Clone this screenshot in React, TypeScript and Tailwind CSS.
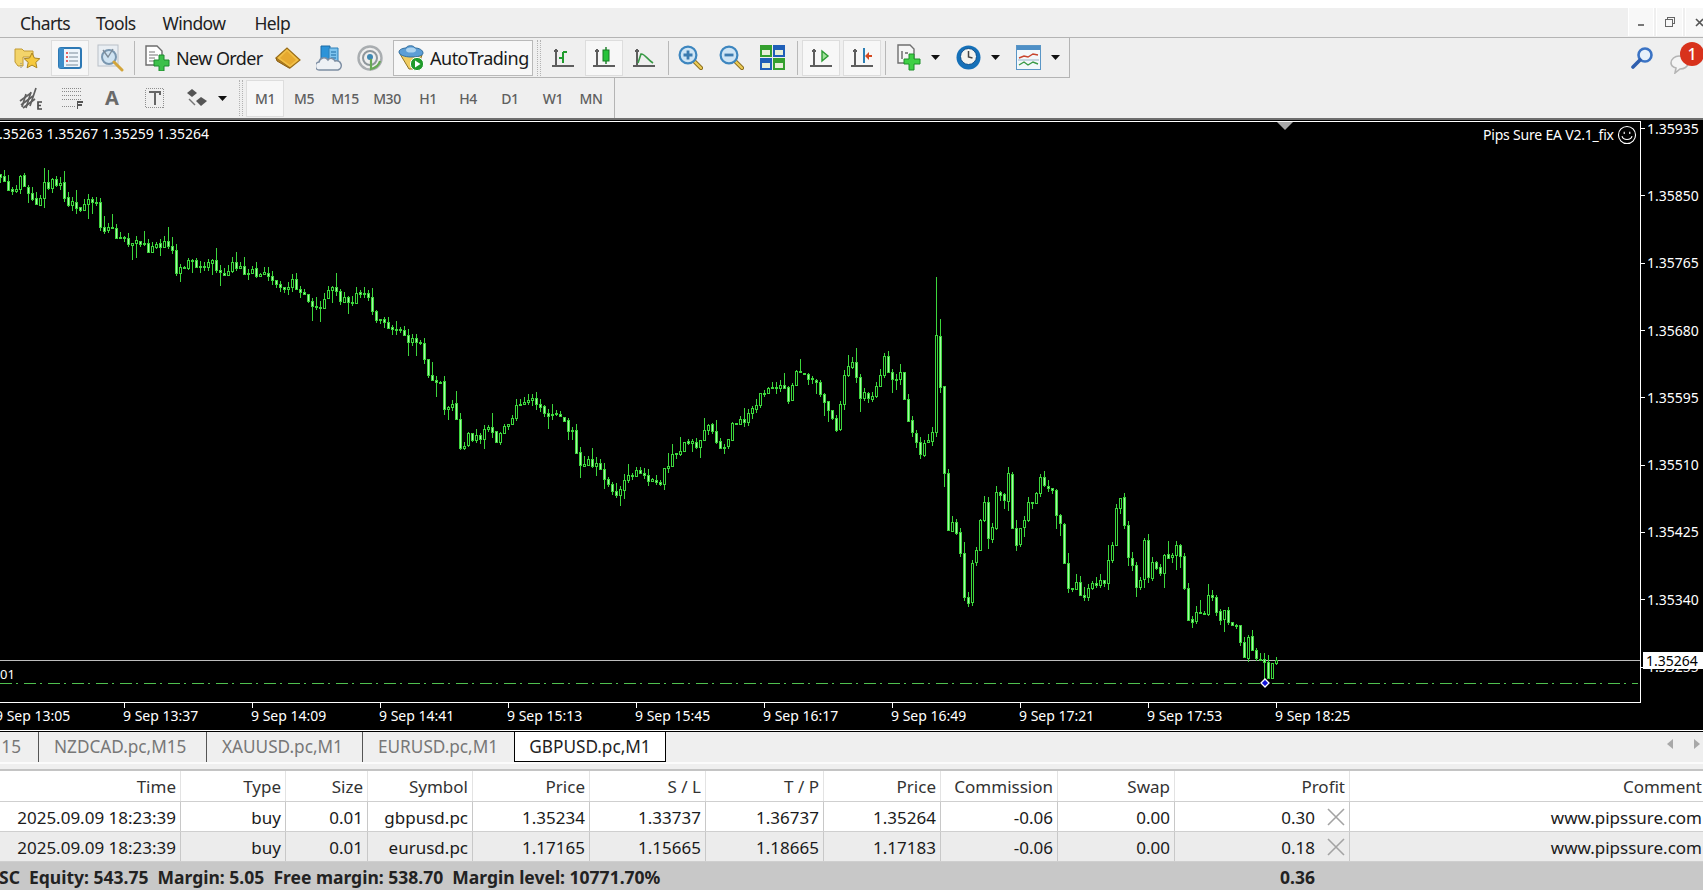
import React from "react";

const FONT = "font-['Noto_Sans','Liberation_Sans',sans-serif]";

/* ---------- chart data (image coordinates) ---------- */
const leftAnchors: [number, number][] = [
  [0,182],[10,192],[20,180],[33,200],[40,203],[44,180],[48,183],[60,183],[62,198],[80,205],[88,200],[97,205],[100,228],
  [115,233],[123,243],[133,245],[138,235],[145,250],[155,247],[163,240],[172,248],[173,273],[180,270],[188,257],[200,268],
  [213,257],[217,275],[225,275],[232,262],[245,270],[260,275],[270,272],[277,290],[283,292],[293,275],[297,293],[308,297],
  [317,310],[332,283],[340,297],[353,300],[363,290],[372,310],[380,323],[393,327],[405,338],[420,340],[422,358],[428,373],
  [440,385],[445,410],[455,405],[457,430],[460,445],[468,438],[480,440],[490,423],[497,440],[508,420],[520,402],[537,399],
  [547,417],[555,412],[573,432],[577,465],[588,460],[593,463],[608,483],[617,497],[625,477],[637,473],[657,487],[667,463],
  [683,447],[700,443],[710,423],[717,447],[728,443],[733,423],[745,423],[760,395],[780,383],[788,400],[793,375],[813,375],
  [828,413],[837,430],[843,373],[852,363],[860,393],[868,398],[880,377],[885,353],[890,382],[900,372],[908,420],[920,450],
  [928,437],[932,437],
];
const rightCloses = [335,387,473,530,522,533,553,597,603,563,550,520,502,538,527,492,495,500,473,528,545,528,520,502,503,493,477,485,488,490,515,523,563,588,589,582,595,597,588,583,585,580,583,560,545,508,498,525,557,565,587,580,540,577,562,568,573,555,558,555,545,556,588,620,622,612,613,613,595,597,612,620,610,622,625,625,642,657,637,650,658,660,662,678,663,660];

type Candle = { x: number; o: number; c: number; hi: number; lo: number };
function buildCandles(): Candle[] {
  let s = 12345;
  const r = () => { s = (s * 1664525 + 1013904223) % 4294967296; return s / 4294967296; };
  const closes: [number, number][] = [];
  let a = 0;
  for (let x = 0; x <= 932; x += 4) {
    while (a < leftAnchors.length - 2 && leftAnchors[a + 1][0] < x) a++;
    const [x0, y0] = leftAnchors[a];
    const [x1, y1] = leftAnchors[a + 1];
    const t = Math.min(1, Math.max(0, (x - x0) / Math.max(1, x1 - x0)));
    closes.push([x, Math.round(y0 + (y1 - y0) * t + (r() - 0.5) * 10)]);
  }
  rightCloses.forEach((c, i) => closes.push([936 + i * 4, c]));
  const spikes: Record<number, [number, number]> = { 44: [168, 208], 48: [170, 190], 936: [277, 437], 940: [319, 393], 944: [387, 487], 1276: [657, 665], 1264: [653, 680], 1272: [663, 679], 1268: [655, 678], 1108: [545, 590] };
  const out: Candle[] = [];
  closes.forEach(([x, c], i) => {
    const o = i === 0 ? c - 3 : closes[i - 1][1] + (r() < 0.3 ? (r() < 0.5 ? 1 : -1) : 0);
    const top = Math.min(o, c), bot = Math.max(o, c);
    const big = r();
    let hi = top - Math.floor(r() * 7) - (big < 0.14 ? 8 : 0);
    let lo = bot + Math.floor(r() * 7) + (big > 0.86 ? 9 : 0);
    if (spikes[x]) { hi = spikes[x][0]; lo = spikes[x][1]; }
    out.push({ x, o, c, hi, lo });
  });
  return out;
}
const candles = buildCandles();

function Chart() {
  return (
    <svg viewBox="0 120 1641 611" className="absolute left-0 top-0 w-[1641px] h-[611px]" shapeRendering="crispEdges">
      <rect x="0" y="660" width="1640" height="1" fill="#bdbdbd" />
      <line x1="0" y1="683.5" x2="1638" y2="683.5" stroke="#4fc04f" strokeWidth="1" strokeDasharray="12 4 2 6" />
      {candles.map((k) => {
        const top = Math.min(k.o, k.c);
        const h = Math.max(1, Math.abs(k.o - k.c));
        const up = k.c < k.o;
        return (
          <g key={k.x}>
            <rect x={k.x} y={k.hi} width="1" height={k.lo - k.hi} fill="#3cd63c" />
            <rect x={k.x - 1} y={top} width="3" height={h + 1} fill="#3cd63c" />
            {h > 1 && <rect x={k.x} y={top + 1} width="1" height={h - 1} fill={up ? "#000000" : "#a6f9a6"} />}
          </g>
        );
      })}
      <g shapeRendering="auto">
        <path d="M1261 683 L1265 679 L1269 683 L1265 687 Z" fill="#1212d8" stroke="#ffffff" strokeWidth="1.3" />
        <path d="M1277 122 H1293 L1285 130 Z" fill="#a8a8a8" />
      </g>
    </svg>
  );
}

/* ---------- icons ---------- */
const FolderStar = () => (
  <svg viewBox="0 0 27 24" className="w-[27px] h-6">
    <path d="M1 3h7l2 2h9v6H9v9H4L1 16z" fill="#f3d46a" stroke="#c29a33" strokeWidth="1" />
    <path d="M18 7l2.4 5 5.4.7-4 3.7 1.1 5.4-4.9-2.7-4.9 2.7 1.1-5.4-4-3.7 5.4-.7z" fill="#f6c93d" stroke="#a98420" strokeWidth="1" />
    <path d="M7 17v6" stroke="#888" strokeDasharray="1 1" />
  </svg>
);
const MarketWatch = () => (
  <svg viewBox="0 0 24 24" className="w-6 h-6">
    <rect x="1" y="2" width="22" height="20" rx="2" fill="#eef5fb" stroke="#2e79b5" strokeWidth="2" />
    <rect x="1" y="2" width="5" height="20" fill="#3f8ec9" />
    <path d="M8 7h2M8 11h2M8 15h2" stroke="#d33" strokeWidth="1.6" />
    <path d="M11 7h9M11 11h9M11 15h9M8 19h12" stroke="#7a8b9a" strokeWidth="1.2" />
  </svg>
);
const ChartSearch = () => (
  <svg viewBox="0 0 28 28" className="w-7 h-7">
    <rect x="1" y="1" width="20" height="21" fill="#e9eef3" stroke="#b9c0c8" />
    <circle cx="12" cy="13" r="7" fill="#cfe3f2" stroke="#7a97b0" strokeWidth="2" />
    <path d="M6 6l5 7 5-8" fill="none" stroke="#7d8b98" strokeWidth="1.3" />
    <path d="M17 18l8 8" stroke="#d3a53a" strokeWidth="3" strokeLinecap="round" />
  </svg>
);
const NewOrder = () => (
  <svg viewBox="0 0 25 26" className="w-[25px] h-[26px]">
    <path d="M1 1h11l5 5v14H1z" fill="#fff" stroke="#6d6d6d" strokeWidth="1.4" />
    <path d="M4 7h6M4 10h9M4 13h6M4 16h6" stroke="#777" strokeWidth="1.2" />
    <path d="M14 10h5v5h5v6h-5v5h-5v-5H9v-6h5z" fill="#3dc04a" stroke="#1c8a2c" strokeWidth="1" />
  </svg>
);
const GoldBook = () => (
  <svg viewBox="0 0 26 22" className="w-[26px] h-[22px]">
    <path d="M1 11L12 1l13 12-10 8z" fill="#f2bf45" stroke="#9a6d17" strokeWidth="1.2" />
    <path d="M1 11l1 3 12 7 1 0" fill="#b07c1e" stroke="#8a5f12" strokeWidth="1" />
    <path d="M12 4l9 9-6 5L5 11z" fill="#e6a92f" />
  </svg>
);
const BlueCloud = () => (
  <svg viewBox="0 0 26 26" className="w-[26px] h-[26px]">
    <path d="M5 1h9v16H5z" fill="#2c93d8" stroke="#1b6aa5" />
    <path d="M13 3h9v15h-9z" fill="#7fc4ee" stroke="#2d7fb8" />
    <path d="M15 7h5M15 10h5M15 13h5" stroke="#1b6aa5" />
    <path d="M4 25a4 4 0 0 1-1-8 5 5 0 0 1 9-2 4 4 0 0 1 7 1 4 4 0 0 1 3 9z" fill="#eef1f5" stroke="#7d8ea3" strokeWidth="1.5" />
  </svg>
);
const Signal = () => (
  <svg viewBox="0 0 26 26" className="w-[26px] h-[26px]" fill="none">
    <circle cx="13" cy="13" r="11.5" stroke="#a9adb0" strokeWidth="2.4" />
    <circle cx="13" cy="13" r="7" stroke="#8f979c" strokeWidth="2" />
    <circle cx="13" cy="12" r="3" fill="#3e88b3" />
    <path d="M14 14v10c4-1 8-4 9-8" stroke="#67a956" strokeWidth="2.2" />
  </svg>
);
const AutoIcon = () => (
  <svg viewBox="0 0 27 27" className="w-[27px] h-[27px]">
    <path d="M2 10l22 1-5 14H11z" fill="#f1cd62" stroke="#8d7323" />
    <path d="M1 8c0-3 5-4 7-4 1-3 8-3 9 0 4 0 8 2 8 5 0 3-6 4-12 4S1 11 1 8z" fill="#5c9ed6" stroke="#326f9f" />
    <ellipse cx="13" cy="6" rx="5" ry="2.6" fill="#aed4ef" />
    <circle cx="19" cy="20" r="6.6" fill="#1f9a2a" stroke="#fff" />
    <path d="M17 16.5l5.5 3.5-5.5 3.5z" fill="#fff" />
  </svg>
);
const Axes = () => (
  <g stroke="#5d5d5d" strokeWidth="1.6" fill="none" shapeRendering="crispEdges">
    <path d="M4 4v17M0 20h22" />
    <path d="M2 6l2-3 2 3" strokeWidth="1" />
  </g>
);
const BarIcon = () => (
  <svg viewBox="0 0 23 24" className="w-[23px] h-6">
    <Axes />
    <path d="M11 17V6M11 6h4M7 12h4" stroke="#1f9c2d" strokeWidth="2" fill="none" />
  </svg>
);
const CandleIcon = () => (
  <svg viewBox="0 0 23 24" className="w-[23px] h-6">
    <Axes />
    <path d="M13 1v17" stroke="#147d22" strokeWidth="1.4" />
    <rect x="10" y="4" width="6" height="11" fill="#26c33a" stroke="#147d22" />
  </svg>
);
const LineIcon = () => (
  <svg viewBox="0 0 23 24" className="w-[23px] h-6">
    <Axes />
    <path d="M5 17l3-9c3-1 6 5 12 9" stroke="#3a9a47" strokeWidth="1.6" fill="none" />
  </svg>
);
const Magnify = ({ minus }: { minus?: boolean }) => (
  <svg viewBox="0 0 25 25" className="w-[25px] h-[25px]">
    <path d="M15 15l8 8" stroke="#8a6c1d" strokeWidth="4.2" strokeLinecap="round" />
    <path d="M15 15l8 8" stroke="#eccb55" strokeWidth="2.4" strokeLinecap="round" />
    <circle cx="10" cy="10" r="8.4" fill="#cfe5f5" stroke="#3d86bf" strokeWidth="2.2" />
    <path d={minus ? "M5.5 10h9" : "M5.5 10h9M10 5.5v9"} stroke="#3d7cb0" strokeWidth="2.8" />
  </svg>
);
const Tile = () => (
  <svg viewBox="0 0 25 25" className="w-[25px] h-[25px]" shapeRendering="crispEdges">
    <rect x="0" y="0" width="12" height="12" fill="#34a02f" />
    <rect x="13" y="0" width="12" height="12" fill="#1f5fb8" />
    <rect x="0" y="13" width="12" height="12" fill="#1f5fb8" />
    <rect x="13" y="13" width="12" height="12" fill="#34a02f" />
    <path d="M2 5h8v5H2zM15 5h8v5h-8zM2 18h8v5H2zM15 18h8v5h-8z" fill="#e8efd9" />
  </svg>
);
const ShiftIcon = () => (
  <svg viewBox="0 0 23 24" className="w-[23px] h-6">
    <Axes />
    <path d="M12 5l6 5-6 5z" fill="#9fe29a" stroke="#2b9b32" strokeWidth="1.4" />
  </svg>
);
const ScrollIcon = () => (
  <svg viewBox="0 0 23 24" className="w-[23px] h-6">
    <Axes />
    <path d="M13 2v15" stroke="#2c7fb5" strokeWidth="2" />
    <path d="M21 9h-3V6l-4 4 4 4v-3h3z" fill="#d5491f" />
  </svg>
);
const NewChart = () => (
  <svg viewBox="0 0 25 27" className="w-[25px] h-[27px]">
    <path d="M1 1h12l4 4v14H1z" fill="#f5f5f5" stroke="#6f6f6f" strokeWidth="1.4" />
    <path d="M5 7v8M8 9h3" stroke="#666" strokeWidth="1.4" fill="none" />
    <path d="M12 10h5v5h6v5h-6v6h-5v-6H7v-5h5z" fill="#3fd045" stroke="#1d9028" />
  </svg>
);
const Clock = () => (
  <svg viewBox="0 0 25 25" className="w-[25px] h-[25px]">
    <circle cx="12.5" cy="12.5" r="12" fill="#1570b8" />
    <circle cx="12.5" cy="11.5" r="8" fill="#f2f2ee" stroke="#0d4f8c" />
    <path d="M12.5 6v6l4 1" stroke="#444" strokeWidth="1.5" fill="none" />
  </svg>
);
const Template = () => (
  <svg viewBox="0 0 25 25" className="w-[25px] h-[25px]">
    <rect x="0.5" y="0.5" width="24" height="24" fill="#f3f8fb" stroke="#5a96c6" />
    <rect x="1" y="1" width="23" height="4" fill="#4e8fc6" />
    <path d="M3 13l5-2 4 1 5-3 5 1" stroke="#c8452e" strokeWidth="1.4" fill="none" />
    <path d="M2 15h21" stroke="#9db6c9" />
    <path d="M3 20l5-3 4 3 5-3 5 2" stroke="#3a9a47" strokeWidth="1.4" fill="none" />
  </svg>
);
const Caret = () => (
  <svg viewBox="0 0 9 5" className="w-[9px] h-[5px]"><path d="M0 0h9L4.5 5z" fill="#111" /></svg>
);
const Grip = () => <div className="w-1 h-[36px] border-x border-dotted border-[#b3b3b3]" />;
const Sep = () => <div className="w-px h-[34px] bg-[#b8b8b8]" />;

const FibE = () => (
  <svg viewBox="0 0 24 24" className="w-6 h-6">
    <path d="M1 15l11-8M2 19l12-9M4 22l12-9" stroke="#5f5f5f" strokeWidth="1.7" fill="none" />
    <path d="M7 8L3 21M12 6L7 22M17 2L11 20" stroke="#5f5f5f" strokeWidth="1.7" fill="none" />
    <path d="M23 16h-4v7h4M19 19.5h3" stroke="#4a4a4a" strokeWidth="1.7" fill="none" />
  </svg>
);
const GridF = () => (
  <svg viewBox="0 0 22 24" className="w-[22px] h-6" shapeRendering="crispEdges">
    <path d="M1 2h20M1 5h20M1 9h20M1 13h20M1 20h14" stroke="#8a8a8a" strokeDasharray="1 1" />
    <path d="M16.5 23v-7h5M16.5 19h4" stroke="#555" strokeWidth="1.7" fill="none" />
  </svg>
);
const TextBox = () => (
  <svg viewBox="0 0 21 22" className="w-[21px] h-[22px]" shapeRendering="crispEdges">
    <rect x="1.5" y="1.5" width="18" height="19" fill="none" stroke="#8f8f8f" strokeDasharray="1 1" />
    <path d="M5 5h11v3M10.5 5v13" stroke="#666" strokeWidth="2" fill="none" />
  </svg>
);
const Shapes = () => (
  <svg viewBox="0 0 23 20" className="w-[23px] h-5">
    <path d="M2 5l5-4 5 4-5 4z" fill="#555" />
    <path d="M11 13l5-4 6 4-6 5z" fill="#555" />
    <path d="M4 11l6 6" stroke="#777" strokeWidth="1.4" />
  </svg>
);

/* ---------- shared bits ---------- */
const activeBox = "flex items-center justify-center w-[38px] h-[36px] bg-[#f7f7f7] border border-[#dddddd]";
const tf = "flex items-center justify-center h-full text-[14px] font-medium tracking-[-0.4px] text-[#5f5f5f]";

const prices = ["1.35935", "1.35850", "1.35765", "1.35680", "1.35595", "1.35510", "1.35425", "1.35340", "1.35255"];
const times = ["9 Sep 13:05", "9 Sep 13:37", "9 Sep 14:09", "9 Sep 14:41", "9 Sep 15:13", "9 Sep 15:45", "9 Sep 16:17", "9 Sep 16:49", "9 Sep 17:21", "9 Sep 17:53", "9 Sep 18:25"];

const grid = "grid grid-cols-[181px_105px_82px_105px_117px_116px_118px_117px_117px_117px_175px_1fr]";
const headers = ["Time", "Type", "Size", "Symbol", "Price", "S / L", "T / P", "Price", "Commission", "Swap", "Profit", "Comment"];
const rows = [
  ["2025.09.09 18:23:39", "buy", "0.01", "gbpusd.pc", "1.35234", "1.33737", "1.36737", "1.35264", "-0.06", "0.00", "0.30", "www.pipssure.com"],
  ["2025.09.09 18:23:39", "buy", "0.01", "eurusd.pc", "1.17165", "1.15665", "1.18665", "1.17183", "-0.06", "0.00", "0.18", "www.pipssure.com"],
];

function Row({ cells, bg }: { cells: string[]; bg: string }) {
  return (
    <div className={`${grid} h-[30px] border-b border-[#cfcfcf] ${bg}`}>
      {cells.map((c, i) =>
        i === 10 ? (
          <div key={i} className="flex items-center justify-end gap-[12px] pr-[4px] border-r border-[#c8c8c8]">
            <span className="pt-[2px]">{c}</span>
            <svg viewBox="0 0 18 18" className="w-[18px] h-[18px]"><path d="M1 1l16 16M17 1L1 17" stroke="#a3a3a3" strokeWidth="1.6" /></svg>
          </div>
        ) : (
          <div key={i} className={`flex items-center justify-end pt-[2px] ${i < 11 ? "pr-[4px] border-r border-[#c8c8c8]" : "pr-px"}`}>{c}</div>
        )
      )}
    </div>
  );
}

export default function App() {
  return (
    <div className={`${FONT} w-[1703px] h-[890px] overflow-hidden flex flex-col bg-[#efefef] text-[#1a1a1a]`}>
      <div className="h-2 bg-white shrink-0" />

      {/* menu */}
      <div className="h-[30px] shrink-0 flex items-center text-[17.5px] tracking-[-0.6px] text-[#222] border-b border-[#b4b4b4]">
        <span className="ml-[20px] mt-[2px]">Charts</span>
        <span className="ml-[26px] mt-[2px]">Tools</span>
        <span className="ml-[27px] mt-[2px]">Window</span>
        <span className="ml-[29px] mt-[2px]">Help</span>
        <div className="ml-auto flex h-full gap-[2px]">
          <div className="w-[26px] h-[28px] bg-[#f8f8f8] border-x border-white flex items-center justify-center">
            <div className="w-[6px] h-[2px] mt-[6px] bg-[#777]" />
          </div>
          <div className="w-[27px] h-[28px] bg-[#f8f8f8] border-x border-white flex items-center justify-center">
            <svg viewBox="0 0 10 10" className="w-[10px] h-[10px]" fill="none" stroke="#666" shapeRendering="crispEdges"><path d="M2.5 2.5v-2h7v6h-2" /><rect x="0.5" y="2.5" width="7" height="7" /></svg>
          </div>
          <div className="w-[18px] h-[28px] bg-[#f8f8f8] border-l border-white flex items-center justify-start pl-[9px]">
            <svg viewBox="0 0 9 9" className="w-[9px] h-[9px] shrink-0" stroke="#555" strokeWidth="1.6"><path d="M1 1l7 7M8 1L1 8" /></svg>
          </div>
        </div>
      </div>

      {/* toolbar 1 */}
      <div className="h-[40px] shrink-0 flex">
        <div className="w-[1070px] h-full flex items-center border-r border-b border-[#b4b4b4]">
          <div className="ml-[14px]"><FolderStar /></div>
          <div className={`ml-[10px] ${activeBox}`}><MarketWatch /></div>
          <div className="ml-[8px]"><ChartSearch /></div>
          <div className="ml-[9px]"><Sep /></div>
          <div className="ml-[10px]"><NewOrder /></div>
          <span className="ml-[6px] w-[86px] text-[18px] tracking-[-0.6px] leading-none whitespace-nowrap">New Order</span>
          <div className="ml-[13px]"><GoldBook /></div>
          <div className="ml-[15px]"><BlueCloud /></div>
          <div className="ml-[15px]"><Signal /></div>
          <div className="ml-[10px] w-[140px] h-[36px] flex items-center bg-[#f7f7f7] border border-[#b9b9b9]">
            <div className="ml-[4px]"><AutoIcon /></div>
            <span className="ml-[5px] text-[18px] tracking-[-0.5px] leading-none whitespace-nowrap">AutoTrading</span>
          </div>
          <div className="ml-[4px]"><Grip /></div>
          <div className="ml-[11px]"><BarIcon /></div>
          <div className={`ml-[10px] ${activeBox}`}><CandleIcon /></div>
          <div className="ml-[10px]"><LineIcon /></div>
          <div className="ml-[12px]"><Sep /></div>
          <div className="ml-[9px]"><Magnify /></div>
          <div className="ml-[16px]"><Magnify minus /></div>
          <div className="ml-[16px]"><Tile /></div>
          <div className="ml-[12px]"><Sep /></div>
          <div className={`ml-[4px] ${activeBox}`}><ShiftIcon /></div>
          <div className={`ml-[3px] ${activeBox}`}><ScrollIcon /></div>
          <div className="ml-[4px]"><Sep /></div>
          <div className="ml-[11px]"><NewChart /></div>
          <div className="ml-[9px]"><Caret /></div>
          <div className="ml-[16px]"><Clock /></div>
          <div className="ml-[10px]"><Caret /></div>
          <div className="ml-[16px]"><Template /></div>
          <div className="ml-[10px]"><Caret /></div>
        </div>
        <div className="relative flex-1">
          <svg viewBox="0 0 22 24" className="absolute left-[561px] top-[9px] w-[22px] h-6">
            <circle cx="14" cy="8" r="6.5" fill="#e8f1fa" stroke="#3b73c4" strokeWidth="2.6" />
            <path d="M9 13L2 20" stroke="#2f5fae" strokeWidth="3.6" strokeLinecap="round" />
          </svg>
          <svg viewBox="0 0 22 20" className="absolute left-[599px] top-[16px] w-[22px] h-5">
            <path d="M10 2c5 0 9 3 9 7s-4 6-8 6l-5 4 1-5C4 13 2 11 2 9c0-4 4-7 8-7z" fill="#f4f4f4" stroke="#b4b4b4" strokeWidth="1.6" />
          </svg>
          <div className="absolute left-[610px] top-[4px] w-6 h-6 rounded-full bg-[#d8321c] flex items-center justify-center text-white text-[16px] font-medium leading-none">1</div>
        </div>
      </div>

      {/* toolbar 2 */}
      <div className="h-[40px] shrink-0 flex">
        <div className="w-[615px] h-full flex items-center border-r border-[#b4b4b4]">
          <div className="ml-[19px]"><FibE /></div>
          <div className="ml-[18px]"><GridF /></div>
          <span className="ml-[22px] w-[16px] text-[20px] font-bold text-[#6a6a6a] leading-none">A</span>
          <div className="ml-[23px]"><TextBox /></div>
          <div className="ml-[20px]"><Shapes /></div>
          <div className="ml-[10px]"><Caret /></div>
          <div className="ml-[12px]"><Grip /></div>
          <div className="ml-[3px] flex items-center h-[37px]">
            <div className={`${tf} w-[38px] bg-[#f7f7f7] border border-[#dddddd]`}>M1</div>
            <div className={`${tf} w-[40px]`}>M5</div>
            <div className={`${tf} w-[42px]`}>M15</div>
            <div className={`${tf} w-[42px]`}>M30</div>
            <div className={`${tf} w-[40px]`}>H1</div>
            <div className={`${tf} w-[40px]`}>H4</div>
            <div className={`${tf} w-[44px]`}>D1</div>
            <div className={`${tf} w-[42px]`}>W1</div>
            <div className={`${tf} w-[34px]`}>MN</div>
          </div>
        </div>
      </div>

      {/* chart */}
      <div className="relative h-[613px] shrink-0 bg-black border-t-2 border-[#6e6e6e] overflow-hidden text-white text-[14px] leading-none">
        <Chart />
        {/* plot frame */}
        <div className="absolute left-[-1px] top-[1px] w-[1642px] h-[582px] border border-white pointer-events-none" />
        <div className="absolute left-[-9px] top-[7px] whitespace-nowrap">1.35263 1.35267 1.35259 1.35264</div>
        <div className="absolute left-[1483px] top-[8px] whitespace-nowrap tracking-[-0.2px]">Pips Sure EA V2.1_fix</div>
        <svg viewBox="0 0 18 18" className="absolute left-[1617px] top-[5px] w-5 h-5" fill="none" stroke="#fff" strokeWidth="1">
          <circle cx="9" cy="9" r="7.7" />
          <path d="M4.5 10c1 4 8 4 9 0" />
          <path d="M6.5 6v2M11.5 6v2" />
        </svg>
        <div className="absolute left-0 top-[548px] text-[13px]">01</div>

        {/* price axis */}
        <div className="absolute right-0 top-0 w-[62px] flex flex-col -mt-[25px]">
          {prices.map((p) => (
            <div key={p} className="h-[67.3px] shrink-0 flex items-center">
              <div className="w-[4px] h-px bg-white" />
              <span className="ml-[2px]">{p}</span>
            </div>
          ))}
        </div>
        <div className="absolute left-[1643px] top-[532px] w-[60px] h-[17px] bg-white text-black flex items-center pl-[3px]">1.35264</div>

        {/* time axis */}
        <div className="absolute left-[-5px] top-[583px] flex">
          {times.map((t) => (
            <div key={t} className="w-[128px] shrink-0 flex flex-col">
              <div className="ml-px w-px h-[5px] bg-white" />
              <span className="mt-[1px] whitespace-nowrap">{t}</span>
            </div>
          ))}
        </div>
        <div className="absolute left-0 right-0 bottom-0 h-[1px] bg-white" />
      </div>

      {/* tabs */}
      <div className="h-[38px] shrink-0 flex border-t border-black relative text-[17.2px] leading-none text-[#777]">
        <div className="w-[39px] h-[30px] flex items-center justify-end pr-[17px] border-r border-[#555]">15</div>
        <div className="w-[168px] h-[30px] flex items-center pl-[15px] border-r border-[#555] whitespace-nowrap">NZDCAD.pc,M15</div>
        <div className="w-[156px] h-[30px] flex items-center pl-[15px] border-r border-[#555] whitespace-nowrap">XAUUSD.pc,M1</div>
        <div className="w-[151px] h-[30px] flex items-center pl-[15px] whitespace-nowrap">EURUSD.pc,M1</div>
        <div className="w-[152px] h-[30px] flex items-center justify-center bg-white text-[#222] border-x border-b border-black whitespace-nowrap">GBPUSD.pc,M1</div>
        <svg viewBox="0 0 6 10" className="absolute left-[1667px] top-[7px] w-[6px] h-[10px]"><path d="M6 0v10L0 5z" fill="#a8a8a8" /></svg>
        <svg viewBox="0 0 6 10" className="absolute left-[1694px] top-[7px] w-[6px] h-[10px]"><path d="M0 0v10l6-5z" fill="#a8a8a8" /></svg>
        <div className="absolute left-0 right-0 top-[30px] h-[2px] bg-[#fbfbfb]" />
      </div>

      {/* terminal table */}
      <div className="flex-1 flex flex-col text-[17px] leading-none">
        <div className={`${grid} h-[33px] bg-white border-t-2 border-[#c4c4c4] border-b border-b-[#cfcfcf]`}>
          {headers.map((h, i) => (
            <div key={i} className={`flex items-center justify-end pt-[1px] text-[#333] ${i < 11 ? "pr-[4px] border-r border-[#e3e3e3]" : "pr-px"}`}>{h}</div>
          ))}
        </div>
        <Row cells={rows[0]} bg="bg-white" />
        <Row cells={rows[1]} bg="bg-[#ececec]" />
        <div className="flex-1 bg-[#c8c8c8] flex items-center pt-[3px] font-bold text-[17.5px] text-[#222] whitespace-nowrap relative">
          <span className="ml-[-1px]">SC&nbsp; Equity: 543.75&nbsp; Margin: 5.05&nbsp; Free margin: 538.70&nbsp; Margin level: 10771.70%</span>
          <span className="absolute left-[1280px]">0.36</span>
        </div>
      </div>
    </div>
  );
}
